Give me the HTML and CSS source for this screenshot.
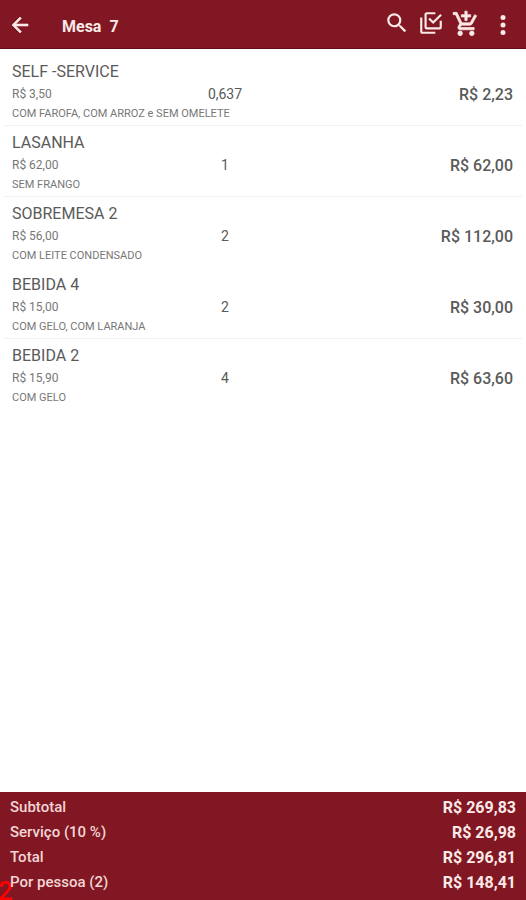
FILE: index.html
```
<!DOCTYPE html>
<html lang="pt-BR">
<head>
    <meta charset="UTF-8">
    <meta name="viewport" content="width=device-width, initial-scale=1.0">
    <title>Mesa 7</title>
    <link rel="stylesheet" href="styles.css">
</head>
<body>
    <header class="toolbar">
        <button class="icon-button back" aria-label="Voltar">
            <svg viewBox="0 0 24 24"><path d="M20 11H7.8l5.6-5.6L12 4l-8 8 8 8 1.4-1.4L7.8 13H20z"/></svg>
        </button>
        <h1>Mesa&nbsp; 7</h1>
        <button class="icon-button" aria-label="Buscar">
            <svg viewBox="0 0 24 24"><path d="M15.5 14h-.79l-.28-.27A6.47 6.47 0 0 0 16 9.5 6.5 6.5 0 1 0 9.5 16c1.61 0 3.09-.59 4.23-1.57l.27.28v.79l5 4.99L20.49 19zm-6 0a4.5 4.5 0 1 1 0-9 4.5 4.5 0 0 1 0 9z"/></svg>
        </button>
        <button class="icon-button" aria-label="Conferir">
            <svg viewBox="0 0 24 24"><path d="M20 16V10h2v6a2 2 0 0 1-2 2H8a2 2 0 0 1-2-2V4c0-1.1.9-2 2-2h8v2H8v12zM10.9 7.1 14 10.2l6.6-6.6L22 5l-8 8-4.5-4.5zM16 20v2H4a2 2 0 0 1-2-2V7h2v13z"/></svg>
        </button>
        <button class="icon-button cart" aria-label="Adicionar ao carrinho">
            <svg viewBox="0 0 24 24"><path d="M11 9h2V6h3V4h-3V1h-2v3H8v2h3zM7 18a2 2 0 1 0 0 4 2 2 0 0 0 0-4zm10 0a2 2 0 1 0 0 4 2 2 0 0 0 0-4zm-9.830-3.250.03-.12.9-1.630h7.450c.75 0 1.410-.41 1.750-1.030l3.860-7.010L19.420 4h-.01l-1.100 2-2.760 5H8.530l-.13-.27L6.160 6l-.95-2-.94-2H1v2h2l3.600 7.590-1.350 2.450C4.520 15.370 5.480 17 7 17h12v-2H7.420a.25.25 0 0 1-.25-.25z"/></svg>
        </button>
        <button class="icon-button menu" aria-label="Mais opções">
            <svg viewBox="0 0 24 24"><circle cx="12" cy="3" r="3"/><circle cx="12" cy="12" r="3"/><circle cx="12" cy="21" r="3"/></svg>
        </button>
    </header>

    <main>
        <ul class="items">
            <li class="item">
                <h2>SELF -SERVICE</h2>
                <span class="price">R$ 3,50</span>
                <span class="quantity">0,637</span>
                <strong class="total">R$ 2,23</strong>
                <p>COM FAROFA, COM ARROZ e SEM OMELETE</p>
            </li>
            <li class="item">
                <h2>LASANHA</h2>
                <span class="price">R$ 62,00</span>
                <span class="quantity">1</span>
                <strong class="total">R$ 62,00</strong>
                <p>SEM FRANGO</p>
            </li>
            <li class="item no-line">
                <h2>SOBREMESA 2</h2>
                <span class="price">R$ 56,00</span>
                <span class="quantity">2</span>
                <strong class="total">R$ 112,00</strong>
                <p>COM LEITE CONDENSADO</p>
            </li>
            <li class="item">
                <h2>BEBIDA 4</h2>
                <span class="price">R$ 15,00</span>
                <span class="quantity">2</span>
                <strong class="total">R$ 30,00</strong>
                <p>COM GELO, COM LARANJA</p>
            </li>
            <li class="item no-line">
                <h2>BEBIDA 2</h2>
                <span class="price">R$ 15,90</span>
                <span class="quantity">4</span>
                <strong class="total">R$ 63,60</strong>
                <p>COM GELO</p>
            </li>
        </ul>
    </main>

    <footer class="summary">
        <span class="badge">2</span>
        <dl>
            <div><dt>Subtotal</dt><dd>R$ 269,83</dd></div>
            <div><dt>Serviço (10 %)</dt><dd>R$ 26,98</dd></div>
            <div><dt>Total</dt><dd>R$ 296,81</dd></div>
            <div><dt>Por pessoa (2)</dt><dd>R$ 148,41</dd></div>
        </dl>
    </footer>
</body>
</html>
```
FILE: styles.css
```
* {
    box-sizing: border-box;
}

body {
    display: flex;
    flex-direction: column;
    min-height: 100vh;
    margin: 0;
    background: #fff;
    color: #5a5a5a;
    font-family: Roboto, sans-serif;
}

h1, h2, p, ul, dl, dd {
    margin: 0;
    padding: 0;
}

.toolbar {
    display: flex;
    align-items: center;
    gap: 8px;
    height: 49px;
    padding: 0 10px 2px 8px;
    background: #801722;
    border-bottom: 1px solid #5e0d16;
    color: #fbe9e7;
}

.toolbar h1 {
    flex: 1;
    margin-left: 22px;
    padding-top: 6px;
    font-size: 16px;
    font-weight: 700;
}

.icon-button {
    width: 26px;
    height: 26px;
    padding: 0;
    border: none;
    background: none;
    color: inherit;
    cursor: pointer;
}

.icon-button svg {
    display: block;
    width: 100%;
    height: 100%;
    fill: currentColor;
}

.icon-button.back {
    width: 24px;
    height: 24px;
    margin-top: 4px;
}

.icon-button.back svg,
.icon-button.cart svg {
    stroke: currentColor;
    stroke-width: 0.6;
}

.icon-button.cart {
    height: 28px;
    width: 28px;
    margin-top: 2px;
}

.icon-button.menu {
    height: 20px;
    margin: 4px 0 0 2px;
}

main {
    flex: 1;
    padding: 6px 4px;
}

.items {
    list-style: none;
}

.item {
    display: grid;
    grid-template-columns: 160px 106px 1fr;
    grid-template-rows: 22px 24px 14px;
    align-items: center;
    padding: 5px 9px 5px 8px;
    border-bottom: 1px solid #f1f1f1;
}

.item.no-line {
    border-color: transparent;
}

.item h2 {
    grid-column: 1 / -1;
    font-size: 16px;
    font-weight: 400;
}

.price {
    font-size: 12px;
    color: #777;
}

.quantity {
    font-size: 14px;
    text-align: center;
}

.total {
    font-size: 16px;
    font-weight: 500;
    text-align: right;
}

.item p {
    grid-column: 1 / -1;
    font-size: 11px;
    color: #777;
}

.summary {
    position: relative;
    overflow: hidden;
    padding: 3px 10px 5px;
    background: #801722;
    color: #f3d5d5;
    font-size: 16px;
}

.summary div {
    position: relative;
    display: flex;
    justify-content: space-between;
    line-height: 25px;
}

.summary dt {
    font-size: 15px;
    font-weight: 500;
}

.summary dd {
    color: #fbe9e7;
    font-weight: 700;
}

.badge {
    position: absolute;
    left: -2px;
    bottom: -6px;
    color: #f00;
    font-size: 26px;
    font-weight: 500;
    line-height: 30px;
}
```
